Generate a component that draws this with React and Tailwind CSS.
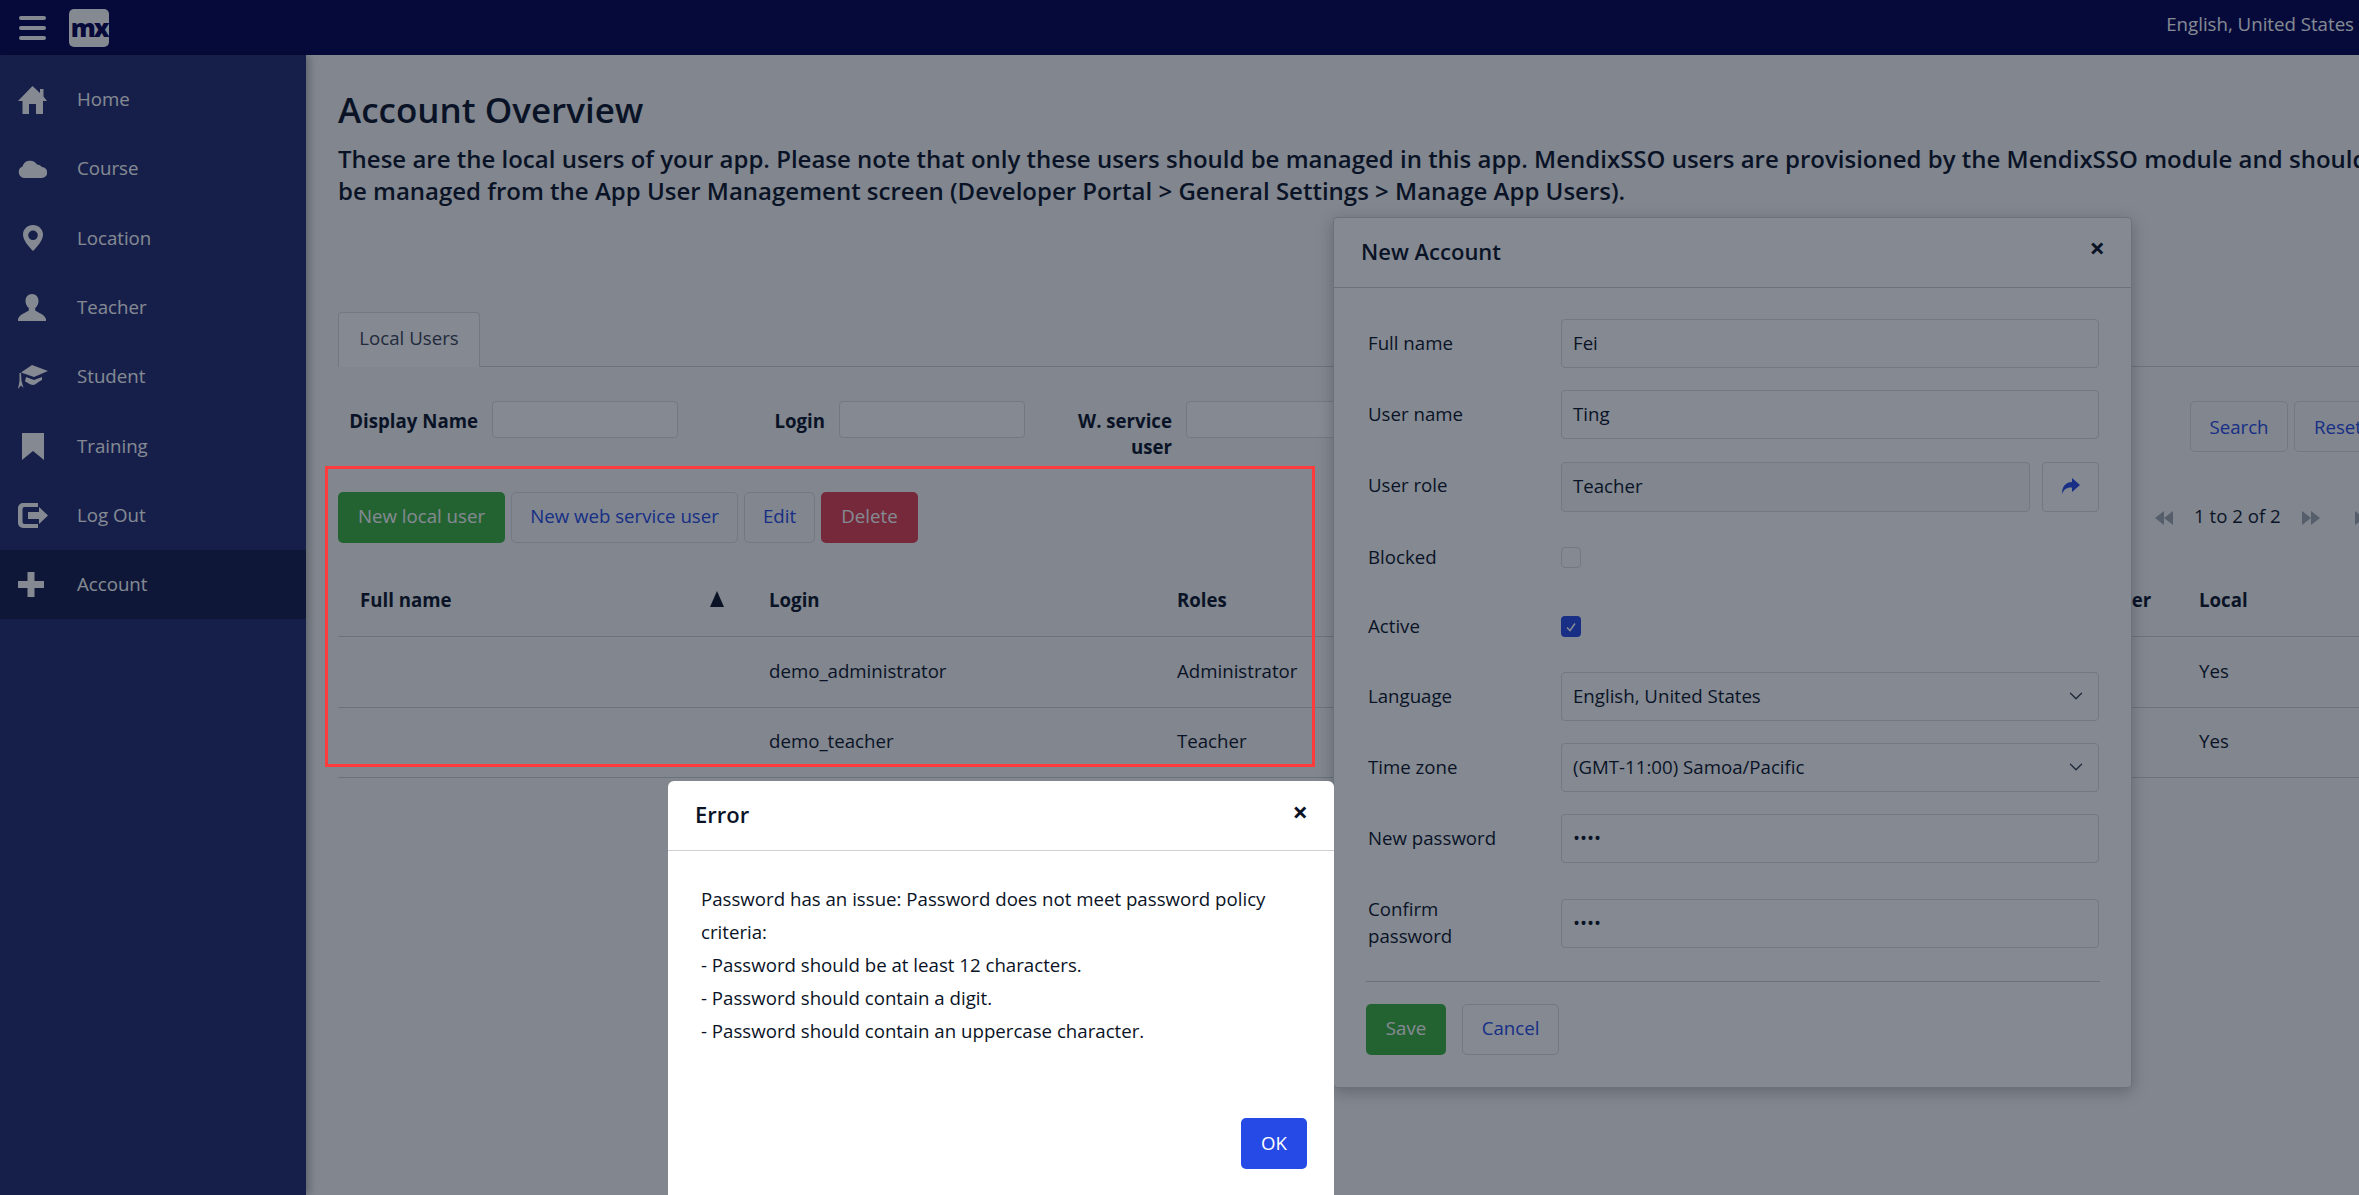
import { ChevronDown } from 'lucide-react'

function HomeIcon(props) {
  return (
    <svg viewBox="0 0 29 28" fill="currentColor" {...props}>
      <path d="M14.500 0L22 7V3h3.500v7.500L29 15h-4v13h-7V18h-7v10H4.500V15H0z" />
    </svg>
  )
}

function CloudIcon(props) {
  return (
    <svg viewBox="0 0 29 19" fill="currentColor" {...props}>
      <path d="M6 19A6 6 0 0 1 4.500 7.500 8 8 0 0 1 19 5.500 6 6 0 0 1 24 8a5.500 5.500 0 0 1-.5 11z" />
    </svg>
  )
}

function UserIcon(props) {
  return (
    <svg viewBox="0 0 28 27" fill="currentColor" {...props}>
      <path d="M14 0c-4 0-6.500 3-6.500 7 0 3 1.400 5.600 3.300 7v2.500C8 18.500 1.500 20.500 0 25v2h28v-2c-1.500-4.500-8-6.500-10.800-8.500V14c1.900-1.400 3.300-4 3.300-7 0-4-2.500-7-6.500-7z" />
    </svg>
  )
}

function MarkerIcon(props) {
  return (
    <svg viewBox="0 0 20 26" fill="currentColor" {...props}>
      <path fillRule="evenodd" d="M10 0C4.500 0 0 4.200 0 9.500 0 15.500 6 22 10 26c4-4 10-10.500 10-16.500C20 4.200 15.500 0 10 0zm0 5.500a4.800 4.800 0 1 1 0 9.600 4.800 4.800 0 0 1 0-9.600z" />
    </svg>
  )
}

function CapIcon(props) {
  return (
    <svg viewBox="0 0 30 24" fill="currentColor" {...props}>
      <path d="M14 0l16 6-14 6-13-4.500z" />
      <path d="M1.500 8H3l.5 8 2 7-2.500-2.500L0 24l1.500-8z" />
      <path d="M8 12l8 3 8-3v3c-4 1.500-6 5-9 5s-6-3-8-3.500z" />
    </svg>
  )
}

function BookmarkIcon(props) {
  return (
    <svg viewBox="0 0 22 27" fill="currentColor" {...props}>
      <path d="M0 0h22v27l-11-9-11 9z" />
    </svg>
  )
}

function LogOutIcon(props) {
  return (
    <svg viewBox="0 0 30 25" fill="currentColor" {...props}>
      <path d="M5 0h15v4H6.500a2 2 0 0 0-2 2v13a2 2 0 0 0 2 2H20v4H5a5 5 0 0 1-5-5V5a5 5 0 0 1 5-5z" />
      <path d="M21 4l9 8.500-9 8.500v-5H10V9h11z" />
    </svg>
  )
}

function PlusIcon(props) {
  return (
    <svg viewBox="0 0 26 25" fill="currentColor" {...props}>
      <path d="M9.500 0h7v9H26v7h-9.500v9h-7v-9H0V9h9.500z" />
    </svg>
  )
}

function ShareIcon(props) {
  return (
    <svg viewBox="0 0 19 16" fill="currentColor" {...props}>
      <path d="M11 0l8 7-8 7V9.500C6 9 3 11 1 16 1 9 4 4.500 11 4z" />
    </svg>
  )
}

function DoubleArrow({ flip }) {
  return (
    <svg viewBox="0 0 18 14" fill="currentColor" className={flip ? 'h-[14px] w-[18px] shrink-0 rotate-180' : 'h-[14px] w-[18px] shrink-0'}>
      <path d="M9 0v14L0 7zM18 0v14L9 7z" />
    </svg>
  )
}

const navItems = [
  { label: 'Home', icon: <HomeIcon className="h-[28px] w-[29px]" /> },
  { label: 'Course', icon: <CloudIcon className="h-[19px] w-[29px]" /> },
  { label: 'Location', icon: <MarkerIcon className="ml-[5px] h-[26px] w-[20px]" /> },
  { label: 'Teacher', icon: <UserIcon className="h-[27px] w-[28px]" /> },
  { label: 'Student', icon: <CapIcon className="h-[24px] w-[30px]" /> },
  { label: 'Training', icon: <BookmarkIcon className="ml-[4px] h-[27px] w-[22px]" /> },
  { label: 'Log Out', icon: <LogOutIcon className="h-[25px] w-[30px]" /> },
  { label: 'Account', icon: <PlusIcon className="h-[25px] w-[26px]" />, active: true },
]

const dimBorder = 'border border-[#dcdde0]'

function Btn({ children, className = '' }) {
  return (
    <div className={`flex h-[51px] shrink-0 items-center justify-center rounded-[5px] ${className}`}>
      {children}
    </div>
  )
}

function SearchField({ label }) {
  return (
    <div className="flex w-[347px] shrink-0 items-start">
      <div className="w-[140px] pt-[7px] text-right font-bold leading-[26px]">{label}</div>
      <div className={`ml-[14px] h-[37px] w-[186px] rounded-[4px] bg-white ${dimBorder}`} />
    </div>
  )
}

function FormRow({ label, children, className = '', labelClass = 'pb-[2px]' }) {
  return (
    <div className={`flex items-center pl-[2px] ${className}`}>
      <div className={`w-[193px] shrink-0 font-medium leading-[27px] ${labelClass}`}>{label}</div>
      {children}
    </div>
  )
}

function Field({ children, className = 'w-[538px]' }) {
  return (
    <div className={`flex h-[49px] items-center justify-between rounded-[4px] pb-[1px] pl-[11px] pr-[11px] ${dimBorder} ${className}`}>
      {children}
    </div>
  )
}

export default function App() {
  return (
    <div className="relative h-[1195px] w-[2359px] overflow-hidden bg-[#f8f8f8] font-['Open_Sans',sans-serif] text-[18.67px] text-[#0a1326]">
      {/* Top bar */}
      <header className="flex h-[55px] items-center justify-between bg-[#000050] text-white">
        <div className="flex items-center">
          <div className="ml-[19px] flex w-[27px] flex-col gap-[6px]">
            <span className="h-[4px] rounded-full bg-white" />
            <span className="h-[4px] rounded-full bg-white" />
            <span className="h-[4px] rounded-full bg-white" />
          </div>
          <div className="ml-[23px] flex h-[38px] w-[40px] items-center justify-center rounded-[5px] bg-white text-[25px] font-extrabold leading-none tracking-[-2px] text-[#000050]">
            mx
          </div>
        </div>
        <span className="mb-[7px] pr-[5px]">English, United States</span>
      </header>

      <div className="flex h-[1140px]">
        {/* Sidebar */}
        <nav className="relative w-[306px] shrink-0 bg-[#22296f] pt-[10px] text-white shadow-[3px_0_8px_rgba(0,0,0,0.3)]">
          {navItems.map((item) => (
            <div key={item.label} className={`flex h-[69.3px] items-center pl-[18px] ${item.active ? 'bg-[#131a4a]' : ''}`}>
              <div className="w-[59px]">{item.icon}</div>
              <span className="pb-[1px]">{item.label}</span>
            </div>
          ))}
        </nav>

        {/* Page content */}
        <main className="w-[2053px] overflow-hidden pl-[32px]">
          <div className="w-[2100px]">
            <h1 className="mt-[33px] text-[35px] font-semibold leading-[44px]">Account Overview</h1>
            <p className="mt-[11px] whitespace-nowrap text-[24px] font-semibold leading-[32px]">
              These are the local users of your app. Please note that only these users should be managed in this app. MendixSSO users are provisioned by the MendixSSO module and should not
              <br />
              be managed from the App User Management screen (Developer Portal &gt; General Settings &gt; Manage App Users).
            </p>

            {/* Tabs */}
            <div className="mt-[105px] h-[55px] border-b border-[#ced0d3]">
              <div className={`flex h-[55px] w-[142px] items-center justify-center rounded-t-[4px] border-b-0 bg-white pb-[4px] text-[#3a4150] ${dimBorder}`}>
                Local Users
              </div>
            </div>

            {/* Search bar */}
            <div className="mt-[34px] flex h-[60px] items-start">
              <SearchField label="Display Name" />
              <SearchField label="Login" />
              <SearchField label={<>W. service<br />user</>} />
              <div className="ml-[111px] flex w-[900px] gap-[6px] pl-[700px] text-[#264ae5]">
                <Btn className={`h-[50px] w-[98px] ${dimBorder}`}>Search</Btn>
                <Btn className={`h-[50px] w-[88px] ${dimBorder}`}>Reset</Btn>
              </div>
            </div>

            {/* Toolbar */}
            <div className="mt-[31px] flex items-center">
              <div className="flex gap-[6px]">
                <Btn className="w-[167px] bg-[#3cb33d] pb-[3px] text-white">New local user</Btn>
                <Btn className={`w-[227px] pb-[3px] text-[#264ae5] ${dimBorder}`}>New web service user</Btn>
                <Btn className={`w-[71px] pb-[3px] text-[#264ae5] ${dimBorder}`}>Edit</Btn>
                <Btn className="w-[97px] bg-[#e33f4e] pb-[3px] text-white">Delete</Btn>
              </div>
              <div className="ml-[1237px] flex shrink-0 items-center text-[#a5a9b0]">
                <DoubleArrow />
                <span className="mx-[21px] pb-[3px] text-[#0a1326]">1 to 2 of 2</span>
                <DoubleArrow flip />
                <span className="ml-[35px]"><DoubleArrow flip /></span>
              </div>
            </div>

            {/* Users table */}
            <table className="mt-[23px] w-[2021px] table-fixed border-collapse text-left">
              <colgroup>
                <col className="w-[409px]" />
                <col className="w-[408px]" />
                <col className="w-[839px]" />
                <col className="w-[183px]" />
                <col />
              </colgroup>
              <thead>
                <tr className="h-[70px] border-b border-[#ced0d3]">
                  <th className="relative pb-[1px] pl-[22px] font-bold">
                    Full name
                    <span className="absolute left-[372px] top-[25px] h-0 w-0 border-x-[7px] border-b-[16px] border-x-transparent border-b-[#0a1326]" />
                  </th>
                  <th className="pb-[1px] pl-[22px] font-bold">Login</th>
                  <th className="pb-[1px] pl-[22px] font-bold">Roles</th>
                  <th className="whitespace-nowrap pb-[1px] font-bold">Web service user</th>
                  <th className="pb-[1px] pl-[22px] font-bold">Local</th>
                </tr>
              </thead>
              <tbody>
                <tr className="h-[71px] border-b border-[#ced0d3]">
                  <td />
                  <td className="pb-[2px] pl-[22px]">demo_administrator</td>
                  <td className="pb-[2px] pl-[22px]">Administrator</td>
                  <td />
                  <td className="pb-[2px] pl-[22px]">Yes</td>
                </tr>
                <tr className="h-[70px] border-b border-[#ced0d3]">
                  <td />
                  <td className="pb-[2px] pl-[22px]">demo_teacher</td>
                  <td className="pb-[2px] pl-[22px]">Teacher</td>
                  <td />
                  <td className="pb-[2px] pl-[22px]">Yes</td>
                </tr>
              </tbody>
            </table>
          </div>
        </main>
      </div>

      {/* New Account dialog, behind the underlay */}
      <section className="absolute left-[1333px] top-[217px] h-[871px] w-[799px] rounded-[4px] border border-[#ced0d3] bg-white shadow-[0_4px_16px_rgba(0,0,0,0.25)]">
        <div className="relative flex h-[70px] items-center border-b border-[#ced0d3] pb-[2px] pl-[27px] text-[22px] font-semibold">
          New Account
          <span className="absolute right-[26px] top-[15px] text-[27px] font-bold leading-[30px]">×</span>
        </div>
        <div className="pl-[32px] pr-[31px] pt-[31px]">
          <FormRow label="Full name"><Field>Fei</Field></FormRow>
          <FormRow label="User name" className="mt-[22px]"><Field>Ting</Field></FormRow>
          <FormRow label="User role" labelClass="pb-[6px]" className="mt-[23px]">
            <Field className="h-[50px] w-[469px] bg-[#f8f8f8] pb-[3px]">Teacher</Field>
            <div className={`ml-[12px] flex h-[50px] w-[57px] items-center justify-center rounded-[4px] pb-[3px] text-[#264ae5] ${dimBorder}`}>
              <ShareIcon className="h-[16px] w-[19px]" />
            </div>
          </FormRow>
          <FormRow label="Blocked" className="mt-[31px]">
            <div className={`h-[21px] w-[20px] rounded-[4px] ${dimBorder}`} />
          </FormRow>
          <FormRow label="Active" className="mt-[40px]">
            <div className="flex h-[21px] w-[20px] items-center justify-center rounded-[4px] bg-[#264ae5]">
              <svg viewBox="0 0 12 12" className="h-[12px] w-[12px]" fill="none" stroke="white" strokeWidth="1.500"><path d="M2 6.500l3 3 5-7" /></svg>
            </div>
          </FormRow>
          <FormRow label="Language" className="mt-[31px]">
            <Field>English, United States<ChevronDown className="h-[22px] w-[22px] text-[#3a4150]" strokeWidth={1.500} /></Field>
          </FormRow>
          <FormRow label="Time zone" className="mt-[22px]">
            <Field>(GMT-11:00) Samoa/Pacific<ChevronDown className="h-[22px] w-[22px] text-[#3a4150]" strokeWidth={1.500} /></Field>
          </FormRow>
          <FormRow label="New password" className="mt-[22px]"><Field>••••</Field></FormRow>
          <FormRow label={<>Confirm<br />password</>} className="mt-[32px]">
            <Field>••••</Field>
          </FormRow>
          <div className="mt-[30px] flex gap-[16px] border-t border-[#ced0d3] pt-[22px]">
            <Btn className="w-[80px] bg-[#3cb33d] pb-[3px] text-white">Save</Btn>
            <Btn className={`w-[97px] pb-[3px] text-[#264ae5] ${dimBorder}`}>Cancel</Btn>
          </div>
        </div>
      </section>

      {/* Underlay */}
      <div className="absolute inset-0 bg-[#0a1326]/50" />

      {/* Highlight round the toolbar and table */}
      <div className="absolute left-[325px] top-[466px] h-[301px] w-[990px] border-[3px] border-[#ff3b3b]" />

      {/* Error dialog */}
      <section className="absolute left-[668px] top-[781px] h-[440px] w-[666px] rounded-[6px] bg-white">
        <div className="relative flex h-[70px] items-center border-b border-[#ced0d3] pb-[2px] pl-[27px] text-[22px] font-semibold">
          Error
          <span className="absolute right-[26px] top-[16px] text-[27px] font-bold leading-[30px]">×</span>
        </div>
        <div className="px-[33px] pt-[31px] leading-[33.1px]">
          <p className="w-[600px]">Password has an issue: Password does not meet password policy criteria:</p>
          <p>- Password should be at least 12 characters.</p>
          <p>- Password should contain a digit.</p>
          <p>- Password should contain an uppercase character.</p>
        </div>
        <div className="absolute left-[573px] top-[337px] flex h-[51px] w-[66px] items-center justify-center rounded-[5px] bg-[#264ae5] pb-[1px] text-white">
          OK
        </div>
      </section>
    </div>
  )
}
